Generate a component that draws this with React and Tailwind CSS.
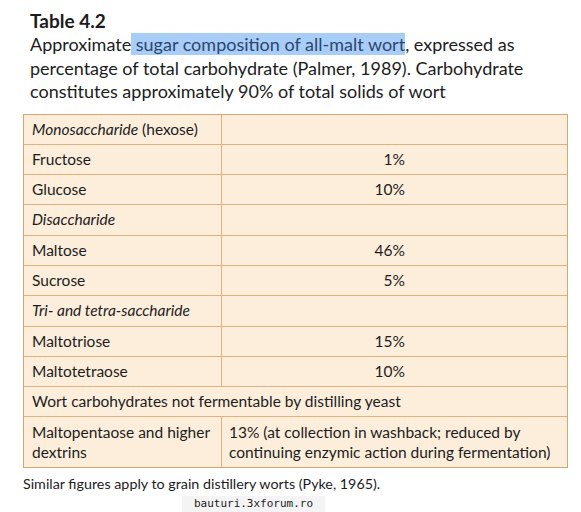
import React from 'react';

const rows = [
    { label: 'Monosaccharide', extra: ' (hexose)', italic: true },
    { label: 'Fructose', value: '1%' },
    { label: 'Glucose', value: '10%' },
    { label: 'Disaccharide', italic: true },
    { label: 'Maltose', value: '46%' },
    { label: 'Sucrose', value: '5%' },
    { label: 'Tri- and tetra-saccharide', italic: true },
    { label: 'Maltotriose', value: '15%' },
    { label: 'Maltotetraose', value: '10%' },
];

const App = () => {
    return (
        <div className="w-[581px] h-[512px] bg-white text-[#1c1c1c] font-['Lato','Open_Sans',sans-serif] overflow-hidden relative">
            <div className="pl-[30px] pt-[9px]">
                <h2 className="text-[19px] font-bold leading-[24px]">Table 4.2</h2>
                <p className="text-[18px] leading-[23.5px] pr-4">
                    Approximate<span className="bg-[#a8cdf6] text-[#2c4670]"> sugar composition of all-malt wort</span>, expressed as percentage of total carbohydrate (Palmer, 1989). Carbohydrate constitutes approximately 90% of total solids of wort
                </p>
            </div>

            <div className="ml-[23px] mt-[10px] w-[545px] border border-[#dca46c] bg-[#fdeedc] text-[15.5px]">
                {rows.map((r, i) => (
                    <div key={i} className="flex h-[30.3px] border-b border-[#e3b17f]">
                        <div className="w-[198px] shrink-0 border-r border-[#e3b17f] pl-[8px] flex items-center">
                            {r.italic ? <em>{r.label}</em> : r.label}
                            {r.extra && <span>&nbsp;{r.extra.trim()}</span>}
                        </div>
                        <div className="flex-1 flex items-center">
                            {r.value && <span className="w-[183px] text-right">{r.value}</span>}
                        </div>
                    </div>
                ))}
                <div className="h-[30.3px] border-b border-[#e3b17f] pl-[8px] flex items-center">
                    Wort carbohydrates not fermentable by distilling yeast
                </div>
                <div className="flex h-[50px] leading-[20px]">
                    <div className="w-[198px] shrink-0 border-r border-[#e3b17f] pl-[8px] flex items-center">
                        Maltopentaose and higher dextrins
                    </div>
                    <div className="flex-1 pl-[7px] flex items-center">
                        13% (at collection in washback; reduced by continuing enzymic action during fermentation)
                    </div>
                </div>
            </div>

            <p className="ml-[23px] mt-[7px] text-[14.3px] leading-[18px]">
                Similar figures apply to grain distillery worts (Pyke, 1965).
            </p>

            <div className="absolute left-[182px] top-[496px] w-[143px] h-[16px] bg-[#f4f4f4] text-center text-[11px] leading-[16px] font-['DejaVu_Sans_Mono',monospace] text-[#222]">
                bauturi.3xforum.ro
            </div>
        </div>
    );
};

export default App;
